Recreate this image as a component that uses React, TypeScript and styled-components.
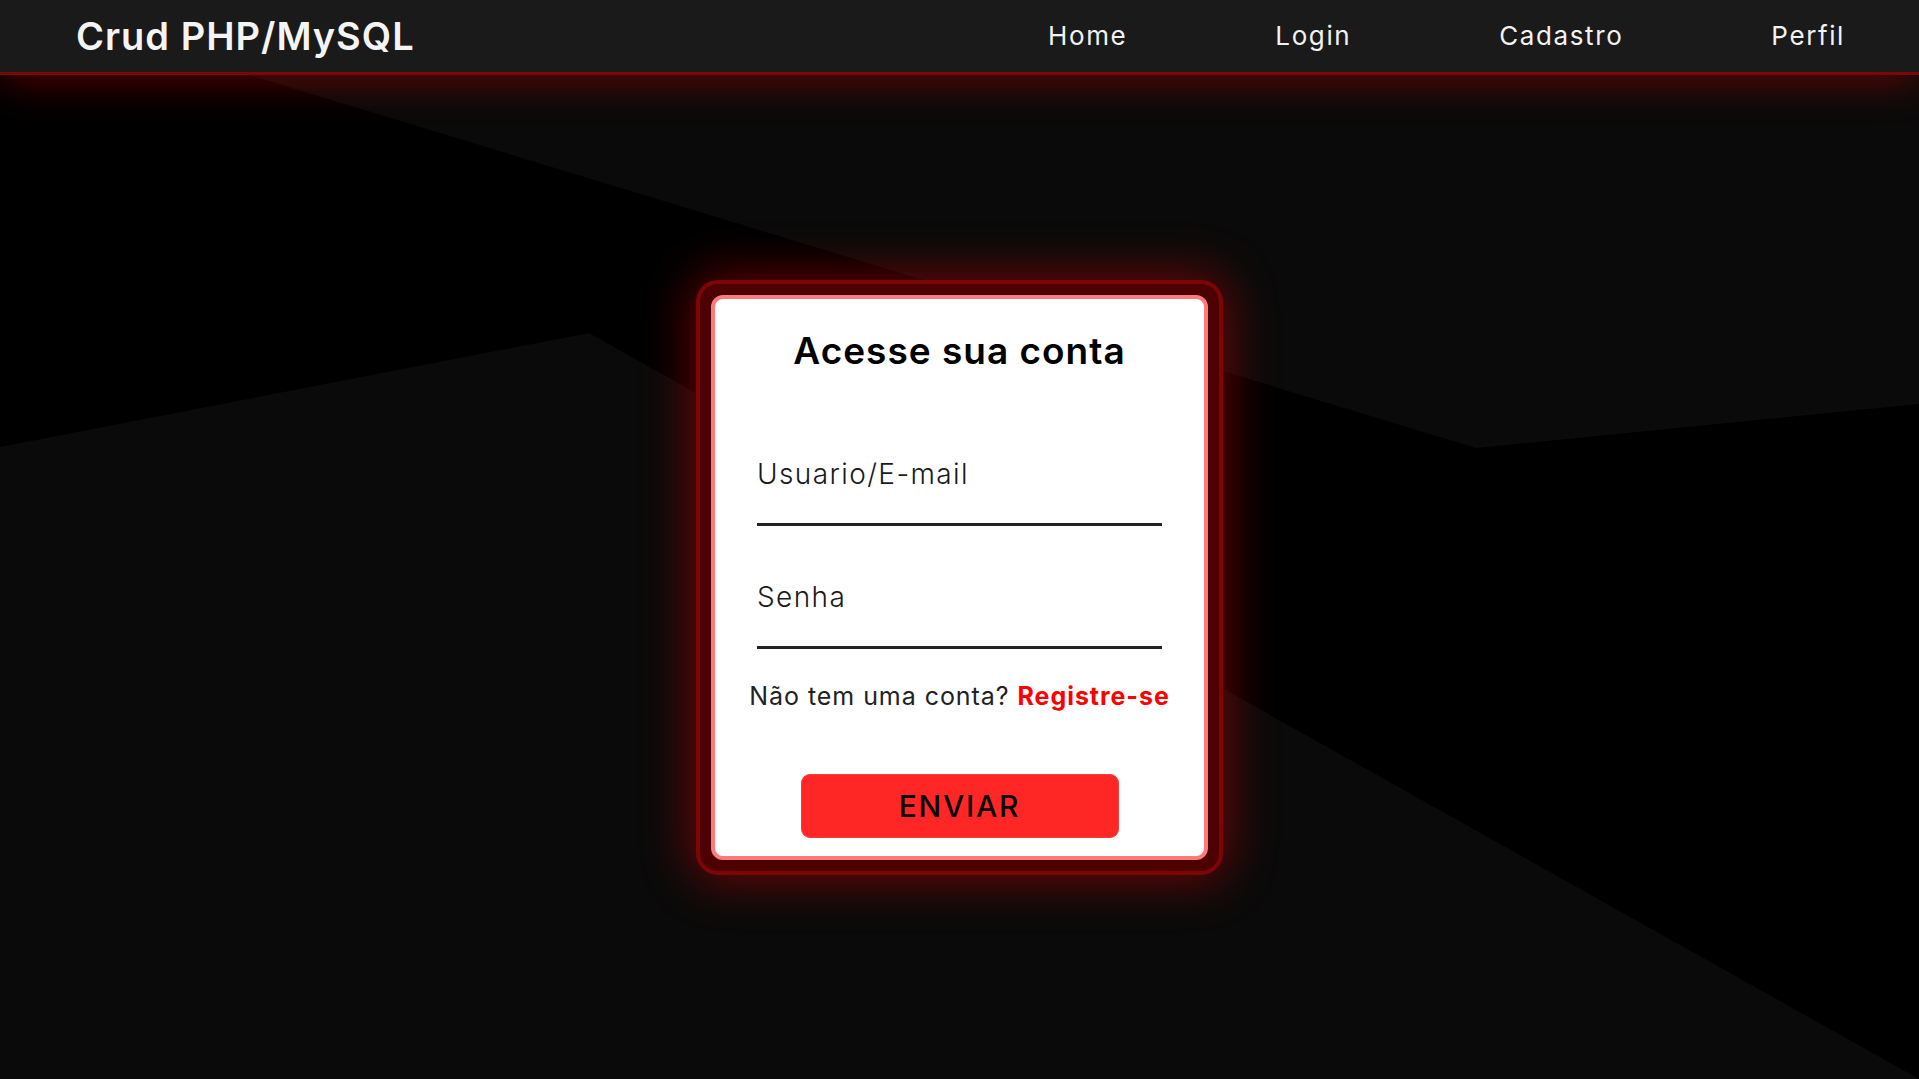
import React from "react";
import styled, { createGlobalStyle } from "styled-components";

const GlobalStyle = createGlobalStyle`
  * { box-sizing: border-box; }
  html, body {
    margin: 0;
    padding: 0;
    height: 100%;
    background: #0a0a0a;
    overflow: hidden;
  }
  body {
    font-family: Inter, "Noto Sans", "DejaVu Sans", sans-serif;
  }
  #root { height: 100%; }
`;

const Page = styled.div`
  display: flex;
  flex-direction: column;
  height: 100vh;
`;

const Header = styled.header`
  position: relative;
  z-index: 2;
  flex: none;
  height: 75px;
  background: #1a1a1a;
  border-bottom: 3px solid #780909;
  box-shadow: 0 0 45px rgba(255, 0, 0, 0.45);
  display: flex;
  align-items: center;
  justify-content: space-between;
  padding: 0 74px 0 76px;
`;

const Logo = styled.a`
  font-size: 38px;
  line-height: 46px;
  font-weight: 600;
  letter-spacing: 1px;
  color: #f4f4f4;
  text-decoration: none;
`;

const Nav = styled.nav`
  display: flex;
  align-items: center;
  gap: 148px;
`;

const NavLink = styled.a`
  font-size: 26px;
  line-height: 32px;
  font-weight: 400;
  letter-spacing: 1.6px;
  color: #f2f2f2;
  text-decoration: none;
`;

const Main = styled.main`
  position: relative;
  flex: 1;
  display: flex;
  align-items: center;
  justify-content: center;
  background: #0a0a0a;
`;

const Backdrop = styled.svg`
  position: absolute;
  inset: 0;
  width: 100%;
  height: 100%;
  z-index: 0;
`;

const Frame = styled.div`
  position: relative;
  z-index: 1;
  width: 527px;
  padding: 11px;
  border: 4px solid #7d0505;
  border-radius: 22px;
  background: #4c0000;
  box-shadow: 0 0 50px 4px rgba(255, 0, 0, 0.42);
`;

const Card = styled.form`
  width: 497px;
  height: 565px;
  background: #ffffff;
  border: 4px solid #ff7b7b;
  border-radius: 12px;
  padding: 30px 0 18px;
  display: flex;
  flex-direction: column;
  align-items: center;
`;

const Title = styled.h1`
  margin: 0 0 84px;
  font-size: 37px;
  line-height: 44px;
  font-weight: 600;
  color: #000;
  letter-spacing: 1px;
`;

const Field = styled.input<{ $gap: number }>`
  display: block;
  width: 405px;
  height: 69px;
  margin: 0 0 ${(p) => p.$gap}px;
  padding: 0 0 32px;
  border: none;
  border-bottom: 3px solid #222;
  background: transparent;
  outline: none;
  font-family: inherit;
  font-size: 28px;
  line-height: 34px;
  font-weight: 300;
  letter-spacing: 1.4px;
  color: #111;
  &::placeholder {
    color: #1a1a1a;
    opacity: 1;
  }
`;

const Signup = styled.p`
  margin: 0 0 63px;
  font-size: 25px;
  line-height: 30px;
  font-weight: 400;
  letter-spacing: 0.95px;
  color: #222;
  white-space: nowrap;
`;

const SignupLink = styled.a`
  font-weight: 700;
  color: #ff0000;
  text-decoration: none;
`;

const Submit = styled.button`
  width: 318px;
  height: 64px;
  border: 1px solid #ff3b3b;
  border-radius: 9px;
  background: #ff2626;
  color: #0a0a0a;
  font-family: inherit;
  font-size: 30px;
  font-weight: 500;
  letter-spacing: 1.8px;
  cursor: pointer;
`;

export default function App() {
  return (
    <Page>
      <GlobalStyle />
      <Header>
        <Logo href="#">Crud PHP/MySQL</Logo>
        <Nav>
          <NavLink href="#">Home</NavLink>
          <NavLink href="#">Login</NavLink>
          <NavLink href="#">Cadastro</NavLink>
          <NavLink href="#">Perfil</NavLink>
        </Nav>
      </Header>
      <Main>
        <Backdrop viewBox="0 0 1919 1004" preserveAspectRatio="none" aria-hidden="true">
          <polygon
            fill="#000000"
            points="0,0 249,0 1476,373 1919,329 1919,1004 589,258 0,372"
          />
        </Backdrop>
        <Frame>
          <Card onSubmit={(e) => e.preventDefault()}>
            <Title>Acesse sua conta</Title>
            <Field $gap={54} type="text" placeholder="Usuario/E-mail" />
            <Field $gap={32} type="password" placeholder="Senha" />
            <Signup>
              Não tem uma conta? <SignupLink href="#">Registre-se</SignupLink>
            </Signup>
            <Submit type="submit">ENVIAR</Submit>
          </Card>
        </Frame>
      </Main>
    </Page>
  );
}
